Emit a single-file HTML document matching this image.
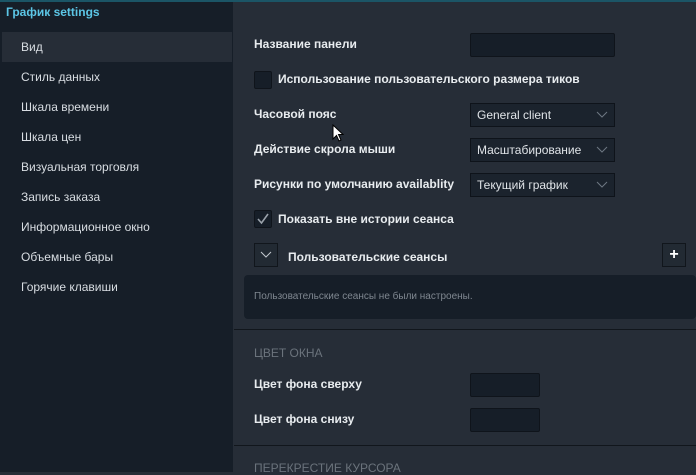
<!DOCTYPE html><html><head><style>
*{margin:0;padding:0;box-sizing:border-box}
body{width:696px;height:472px;overflow:hidden;background:#262d37;font-family:"Liberation Sans","DejaVu Sans",sans-serif;font-size:12px;color:#e4e8ec;position:relative}
.a{position:absolute;white-space:nowrap}
#top{left:0;top:0;width:696px;height:2px;background:#1b5566}
#side{left:0;top:2px;width:233px;height:470px;background:#161e28}
.sel{left:2px;top:32px;width:230px;height:30px;background:#262d37}
.it{left:21px;font-size:12px;color:#d8dde2}
.lb{left:254px;font-weight:bold;font-size:12px;color:#e8ecef}
.box{background:#161e28;border:1px solid #0f141b;border-radius:2px}
.dd{left:470px;width:145px;height:24px;background:#1b232d;border:1px solid #0e131a;padding-left:6px;line-height:22px;font-size:12px;color:#e0e4e8}
.dd svg{position:absolute;right:6px;top:7px}
.sep{left:234px;width:462px;height:1px;background:#11161c}
.hd{left:254px;color:#6b737c;font-size:12px}
</style></head><body>
<div class="a" id="side"></div>
<div class="a" id="top"></div>
<div class="a" style="left:6px;top:5px;color:#5cc6e6;font-weight:bold;font-size:12px">График settings</div>
<div class="a sel"></div>
<div class="a it" style="top:40px">Вид</div>
<div class="a it" style="top:70px">Стиль данных</div>
<div class="a it" style="top:100px">Шкала времени</div>
<div class="a it" style="top:130px">Шкала цен</div>
<div class="a it" style="top:160px">Визуальная торговля</div>
<div class="a it" style="top:190px">Запись заказа</div>
<div class="a it" style="top:220px">Информационное окно</div>
<div class="a it" style="top:250px">Объемные бары</div>
<div class="a it" style="top:280px">Горячие клавиши</div>

<div class="a lb" style="top:37px">Название панели</div>
<div class="a box" style="left:470px;top:33px;width:145px;height:24px"></div>
<div class="a box" style="left:254px;top:71px;width:18px;height:18px"></div>
<div class="a lb" style="left:278px;top:72px">Использование пользовательского размера тиков</div>
<div class="a lb" style="top:107px">Часовой пояс</div>
<div class="a dd" style="top:103px">General client<svg width="12" height="8"><path d="M1 1L6 6L11 1" stroke="#6d7782" fill="none"/></svg></div>
<div class="a lb" style="top:142px">Действие скрола мыши</div>
<div class="a dd" style="top:138px">Масштабирование<svg width="12" height="8"><path d="M1 1L6 6L11 1" stroke="#6d7782" fill="none"/></svg></div>
<div class="a lb" style="top:177px">Рисунки по умолчанию availablity</div>
<div class="a dd" style="top:173px">Текущий график<svg width="12" height="8"><path d="M1 1L6 6L11 1" stroke="#6d7782" fill="none"/></svg></div>
<div class="a box" style="left:254px;top:210px;width:18px;height:18px"><svg width="16" height="16" style="position:absolute;left:0;top:0"><path d="M3 8L6.5 12L13 3" stroke="#9aa2ab" stroke-width="1.6" fill="none"/></svg></div>
<div class="a lb" style="left:278px;top:212px">Показать вне истории сеанса</div>
<div class="a" style="left:254px;top:243px;width:24px;height:24px;border:1px solid #11161c;background:#222a33"><svg width="22" height="22"><path d="M6 8L11 13L16 8" stroke="#c4cad0" fill="none"/></svg></div>
<div class="a lb" style="left:288px;top:250px">Пользовательские сеансы</div>
<div class="a" style="left:662px;top:243px;width:24px;height:24px;border:1px solid #11161c;background:#222a33;color:#fff;font-weight:bold;font-size:16px;text-align:center;line-height:21px">+</div>
<div class="a" style="left:244px;top:275px;width:452px;height:44px;background:#161e28;border-radius:4px"></div>
<div class="a" style="left:254px;top:291px;font-size:10px;color:#7f8790">Пользовательские сеансы не были настроены.</div>
<div class="a sep" style="top:329px"></div>
<div class="a hd" style="top:346px">ЦВЕТ ОКНА</div>
<div class="a lb" style="top:377px">Цвет фона сверху</div>
<div class="a box" style="left:470px;top:373px;width:70px;height:24px"></div>
<div class="a lb" style="top:412px">Цвет фона снизу</div>
<div class="a box" style="left:470px;top:408px;width:70px;height:24px"></div>
<div class="a sep" style="top:445px"></div>
<div class="a hd" style="top:461px">ПЕРЕКРЕСТИЕ КУРСОРА</div>
<svg class="a" style="left:332px;top:124px" width="14" height="20"><path d="M1 1L1 15L4.5 11.5L7 17L9 16L6.5 10.5L11 10.5Z" fill="#fff" stroke="#000" stroke-width="1"/></svg>
</body></html>
